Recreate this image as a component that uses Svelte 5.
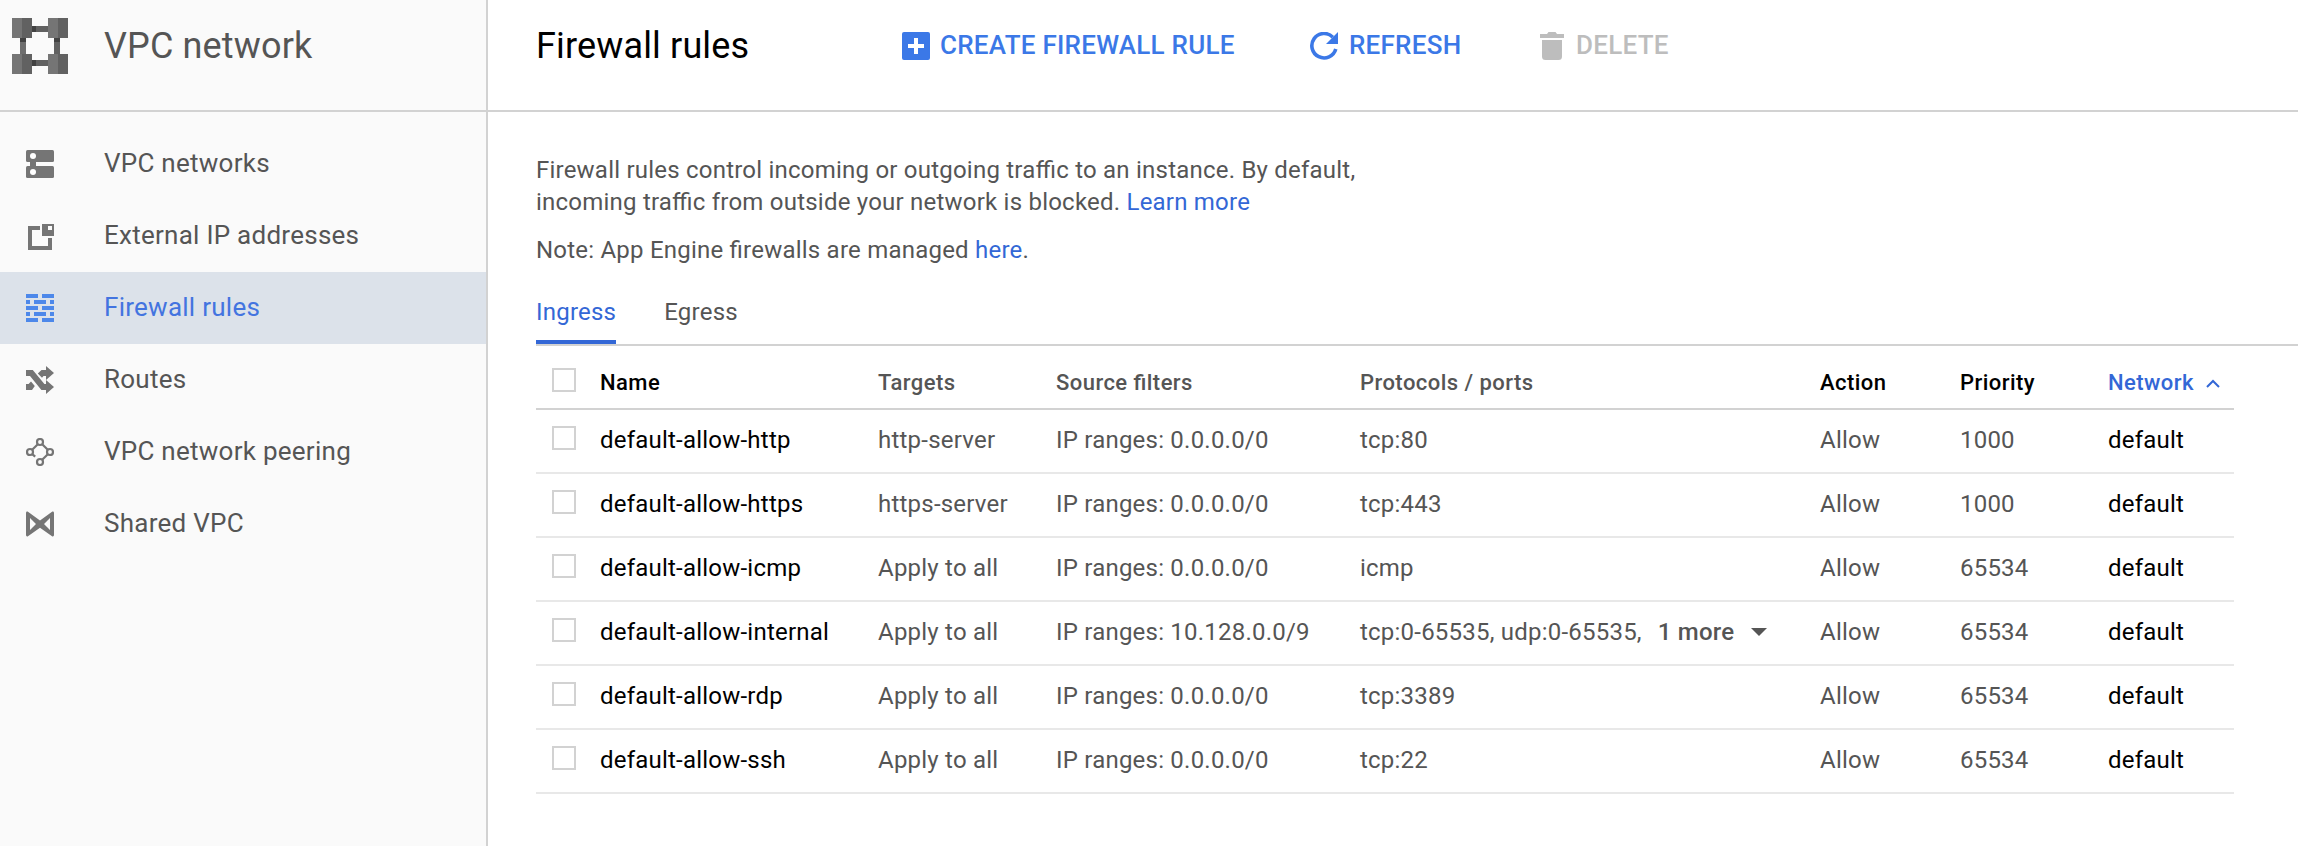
<script>
  const nav = [
    { label: 'VPC networks', icon: 'networks' },
    { label: 'External IP addresses', icon: 'external' },
    { label: 'Firewall rules', icon: 'firewall', active: true },
    { label: 'Routes', icon: 'routes' },
    { label: 'VPC network peering', icon: 'peering' },
    { label: 'Shared VPC', icon: 'shared' }
  ];

  const rules = [
    { name: 'default-allow-http', targets: 'http-server', source: 'IP ranges: 0.0.0.0/0', ports: 'tcp:80', priority: '1000' },
    { name: 'default-allow-https', targets: 'https-server', source: 'IP ranges: 0.0.0.0/0', ports: 'tcp:443', priority: '1000' },
    { name: 'default-allow-icmp', targets: 'Apply to all', source: 'IP ranges: 0.0.0.0/0', ports: 'icmp', priority: '65534' },
    { name: 'default-allow-internal', targets: 'Apply to all', source: 'IP ranges: 10.128.0.0/9', ports: 'tcp:0-65535, udp:0-65535,', more: '1 more', priority: '65534' },
    { name: 'default-allow-rdp', targets: 'Apply to all', source: 'IP ranges: 0.0.0.0/0', ports: 'tcp:3389', priority: '65534' },
    { name: 'default-allow-ssh', targets: 'Apply to all', source: 'IP ranges: 0.0.0.0/0', ports: 'tcp:22', priority: '65534' }
  ];
</script>

<div class="page">
  <aside class="sidebar">
    <div class="product">
      <svg class="logo" width="56" height="56" viewBox="0 0 56 56" shape-rendering="crispEdges">
        {#each [8, 42] as p}
          <rect x="20" y={p} width="16" height="6" fill="#616161" />
          <rect x="20" y={p} width="4" height="6" fill="#424242" />
          <rect x={p} y="20" width="6" height="16" fill={p === 8 ? '#6e6e6e' : '#616161'} />
          <rect x={p} y="20" width="6" height="4" fill="#424242" />
        {/each}
        {#each [[0, 0], [36, 0], [0, 36], [36, 36]] as [x, y]}
          <rect {x} {y} width="10" height="20" fill="#757575" />
          <rect x={x + 10} {y} width="10" height="20" fill="#616161" />
        {/each}
      </svg>
      <span class="product-name">VPC network</span>
    </div>
    <nav>
      {#each nav as item}
        <a class="nav-item" class:active={item.active}>
          <svg width="28" height="28" viewBox="0 0 28 28" fill="currentColor">
            {#if item.icon === 'networks'}
              <rect width="28" height="12" rx="1.5" />
              <rect y="16" width="28" height="12" rx="1.5" />
              <rect x="4" y="11" width="6" height="6" />
              <circle cx="7" cy="6" r="3" fill="#fff" />
              <circle cx="7" cy="22" r="3" fill="#fff" />
            {:else if item.icon === 'external'}
              <path d="M2 4h12v4H6v16h16v-8h4v12H2z" />
              <path fill-rule="evenodd" d="M16 2h12v12H16zM22 4v4h4V4z" />
            {:else if item.icon === 'firewall'}
              <path d="M0 0h12v4H0zM16 0h12v4H16zM0 6h4v4H0zM8 6h12v4H8zM24 6h4v4h-4zM0 12h12v4H0zM16 12h12v4H16zM0 18h4v4H0zM8 18h12v4H8zM24 18h4v4h-4zM0 24h12v4H0zM16 24h12v4H16z" />
            {:else if item.icon === 'routes'}
              <path d="M0 4h6.800L18.400 18H20v-4l8 7-8 7v-4h-4.600L4 10H0z" />
              <path d="M11.800 7.500 15.500 4H20V0l8 7-8 7v-4h-2.500L16 11.800z" />
              <path d="M0 18h2.600l2.400-2.600L8.800 20 6 24H0z" />
            {:else if item.icon === 'peering'}
              <g fill="none" stroke="currentColor" stroke-width="2.200">
                <circle cx="14" cy="4" r="3" />
                <circle cx="4" cy="14" r="3" />
                <circle cx="24" cy="14" r="3" />
                <circle cx="14" cy="24" r="3" />
                <path d="M11.800 6.200 6.200 11.800M16.200 6.200l5.600 5.600M21.800 16.200l-5.600 5.600M6.200 16.200l3 2.500" />
              </g>
            {:else}
              <path fill-rule="evenodd" d="M1.600 1.600 14 10.500 26.400 1.600Q28 1.300 28 3v22q0 1.700-1.600 1.400L14 17.800 1.600 26.400Q0 26.700 0 25V3Q0 1.300 1.600 1.600zM4 8v12l6-6zM24 8v12l-6-6z" />
            {/if}
          </svg>
          <span>{item.label}</span>
        </a>
      {/each}
    </nav>
  </aside>

  <main>
    <header>
      <h1>Firewall rules</h1>
      <div class="actions">
        <button class="create">
          <svg width="28" height="28" viewBox="0 0 28 28">
            <rect width="28" height="28" rx="2" fill="currentColor" />
            <path d="M12 6h4v6h6v4h-6v6h-4v-6H6v-4h6z" fill="#fff" />
          </svg>
          <span>CREATE FIREWALL RULE</span>
        </button>
        <button class="refresh">
          <svg width="28" height="28" viewBox="0 0 28 28">
            <path d="M22.800 5.200A12.200 12.200 0 1 0 25.800 17" fill="none" stroke="currentColor" stroke-width="3.600" />
            <path d="M28 0v12H16z" fill="currentColor" />
          </svg>
          <span>REFRESH</span>
        </button>
        <button class="delete" disabled>
          <svg width="24" height="28" viewBox="0 0 24 28" fill="currentColor">
            <path d="M0 2h7l1.500-2h7L17 2h7v4H0zM2 8h20v16.500q0 3.500-3.500 3.500h-13Q2 28 2 24.500z" />
          </svg>
          <span>DELETE</span>
        </button>
      </div>
    </header>

    <section class="content">
      <p>Firewall rules control incoming or outgoing traffic to an instance. By default,<br />incoming traffic from outside your network is blocked. <a class="link">Learn more</a></p>
      <p>Note: App Engine firewalls are managed <a class="link">here</a>.</p>

      <div class="tabs">
        <span class="tab selected">Ingress</span>
        <span class="tab">Egress</span>
      </div>

      <div class="table">
        <div class="row head">
          <i class="check"></i>
          <span class="strong">Name</span>
          <span>Targets</span>
          <span>Source filters</span>
          <span>Protocols / ports</span>
          <span class="strong">Action</span>
          <span class="strong">Priority</span>
          <span class="sorted">Network
            <svg width="14" height="9" viewBox="0 0 14 9"><path d="M1 8l6-6 6 6" fill="none" stroke="currentColor" stroke-width="2" /></svg>
          </span>
        </div>
        {#each rules as rule}
          <div class="row">
            <i class="check"></i>
            <span class="strong">{rule.name}</span>
            <span>{rule.targets}</span>
            <span>{rule.source}</span>
            <span class="ports">{rule.ports}{#if rule.more}<b>{rule.more}</b><svg width="16" height="8" viewBox="0 0 16 8"><path d="M0 0h16L8 8z" fill="currentColor" /></svg>{/if}</span>
            <span>Allow</span>
            <span>{rule.priority}</span>
            <span class="strong">default</span>
          </div>
        {/each}
      </div>
    </section>
  </main>
</div>

<style>
  :global(body) {
    background: #fff;
  }

  .page {
    display: flex;
    height: 846px;
    overflow: hidden;
    font: 24px/32px Roboto, sans-serif;
    font-feature-settings: "liga" 1;
    letter-spacing: 0.22px;
    color: #555;
    white-space: nowrap;
  }

  svg {
    display: block;
    flex: none;
  }

  .sidebar {
    box-sizing: border-box;
    width: 488px;
    flex: none;
    background: #fafafa;
    border-right: 2px solid #d2d2d2;
  }

  .product {
    box-sizing: border-box;
    height: 112px;
    display: flex;
    gap: 36px;
    padding: 18px 0 0 12px;
    border-bottom: 2px solid #d2d2d2;
  }

  .product-name {
    font-size: 36px;
    line-height: 56px;
    letter-spacing: 0.15px;
  }

  nav {
    padding-top: 16px;
  }

  .nav-item {
    box-sizing: border-box;
    height: 72px;
    display: flex;
    align-items: center;
    gap: 50px;
    padding-left: 26px;
    font-size: 26px;
    letter-spacing: 0.26px;
  }

  .nav-item span {
    padding-bottom: 2px;
  }

  .nav-item svg {
    color: #757575;
  }

  .nav-item.active {
    background: #dce2ea;
    color: #4374e0;
  }

  .nav-item.active svg {
    color: #4d88ea;
  }

  main {
    flex: 1;
    min-width: 0;
  }

  header {
    box-sizing: border-box;
    height: 112px;
    display: flex;
    padding: 18px 0 0 48px;
    border-bottom: 2px solid #d2d2d2;
  }

  h1 {
    margin: 0;
    width: 366px;
    font-size: 36px;
    font-weight: 400;
    line-height: 56px;
    letter-spacing: 0.15px;
    color: #000;
  }

  .actions {
    display: flex;
    align-items: flex-start;
    padding-top: 14px;
  }

  button {
    display: flex;
    padding: 0;
    border: 0;
    background: none;
    font: 500 26px/26px Roboto, sans-serif;
    letter-spacing: 0.25px;
    color: #3b78e7;
    text-align: left;
  }

  button.create {
    width: 408px;
    gap: 10px;
  }

  button.refresh {
    width: 230px;
    gap: 11px;
  }

  button.delete {
    gap: 12px;
    color: #bdbdbd;
  }

  .content {
    padding: 42px 0 0 48px;
  }

  p {
    margin: 0 0 16px;
  }

  .link {
    color: #3367d6;
  }

  .tabs {
    display: flex;
    gap: 48px;
    height: 62px;
    border-bottom: 2px solid #d2d2d2;
  }

  .tab {
    box-sizing: border-box;
    padding-top: 14px;
    height: 62px;
  }

  .tab.selected {
    color: #3367d6;
    border-bottom: 4px solid #3367d6;
  }

  .table {
    width: 1698px;
  }

  .row {
    box-sizing: border-box;
    height: 64px;
    display: grid;
    grid-template-columns: 48px 278px 178px 304px 460px 140px 148px 126px;
    padding: 16px 0 0 16px;
    border-bottom: 2px solid #e8e8e8;
    line-height: 28px;
  }

  .head {
    padding-top: 22px;
    border-bottom-color: #d2d2d2;
    font-size: 22px;
    font-weight: 500;
    letter-spacing: 0.45px;
  }

  .head > span {
    padding-top: 1px;
  }

  .check {
    box-sizing: border-box;
    width: 24px;
    height: 24px;
    border: 2px solid #d2d2d2;
    background: #fff;
  }

  .strong {
    color: #000;
  }

  .sorted {
    display: flex;
    align-items: center;
    gap: 12px;
    height: 28px;
    color: #3367d6;
  }

  .ports {
    display: flex;
    align-items: center;
    height: 28px;
  }

  b {
    margin: 0 17px 0 16px;
    font-weight: 500;
  }
</style>
